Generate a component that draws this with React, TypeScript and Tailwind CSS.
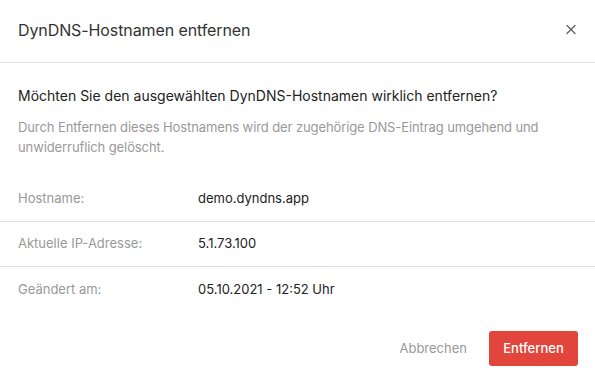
import { X } from "lucide-react";

const rows = [
  { label: "Hostname:", value: "demo.dyndns.app" },
  { label: "Aktuelle IP-Adresse:", value: "5.1.73.100" },
  { label: "Geändert am:", value: "05.10.2021 - 12:52 Uhr" },
];

export default function App() {
  return (
    <div
      className="w-[595px] h-[385px] bg-white text-[#333] overflow-hidden"
      style={{ fontFamily: "Inter, 'Noto Sans', sans-serif" }}
    >
      {/* Header */}
      <div className="h-[63px] pl-[18px] pr-[16px] flex items-center justify-between border-b border-[#e2e2e2]">
        <h2 className="text-[16px] leading-6 text-[#333] -mt-[2px] tracking-[-0.1px]">DynDNS-Hostnamen entfernen</h2>
        <button className="w-4 h-4 flex items-center justify-center text-[#666] -mt-[4px]">
          <X size={17} strokeWidth={2} />
        </button>
      </div>

      {/* Body */}
      <div className="pt-[23px] px-[18px]">
        <p className="text-[14px] leading-5 text-[#222]">
          Möchten Sie den ausgewählten DynDNS-Hostnamen wirklich entfernen?
        </p>
        <p className="mt-[11px] text-[13px] leading-5 text-[#999] tracking-[-0.1px]">
          Durch Entfernen dieses Hostnamens wird der zugehörige DNS-Eintrag umgehend und
          unwiderruflich gelöscht.
        </p>
      </div>

      {/* Details */}
      <div className="mt-[20px]">
        {rows.map((row, i) => (
          <div
            key={row.label}
            className={
              "h-[45px] px-[18px] flex items-center text-[13px] " +
              (i < rows.length - 1 ? "border-b border-[#e2e2e2]" : "")
            }
          >
            <span className="w-[180px] text-[#999]">{row.label}</span>
            <span className="text-[#222]">{row.value}</span>
          </div>
        ))}
      </div>

      {/* Footer */}
      <div className="mt-[19px] pr-[17px] flex items-center justify-end gap-[22px]">
        <button className="text-[13px] text-[#999]">Abbrechen</button>
        <button className="w-[89px] h-[35px] rounded-[3px] bg-[#e2453c] text-white text-[13px] font-medium">
          Entfernen
        </button>
      </div>
    </div>
  );
}
